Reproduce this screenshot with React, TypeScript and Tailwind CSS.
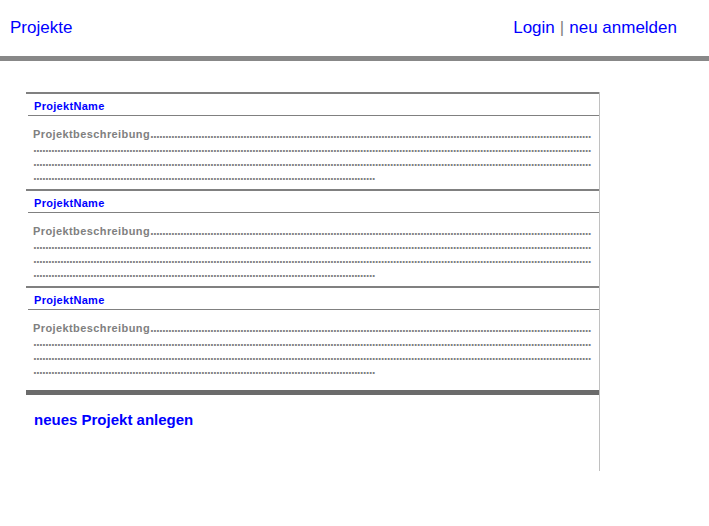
import React from "react"

const projects = ["ProjektName", "ProjektName", "ProjektName"]

// dotted filler rendered as bold periods, like the original page
function Dots({ count }: { count: number }) {
    return (
        <span className="whitespace-nowrap font-['DejaVu_Sans',sans-serif] text-[10px] tracking-[-0.8px]">
            {".".repeat(count)}
        </span>
    )
}

function ProjectRow({ name }: { name: string }) {
    return (
        <div className="border-t-2 border-[#808080]">
            <div className="h-[21px] pl-[8px] pt-[5px] text-[11px] font-bold leading-[14px] tracking-[0.3px] text-[#0000ff]">
                {name}
            </div>
            <div className="ml-[2px] border-t border-[#808080]" />
            <div className="h-[73px] pl-[7px] pt-[11px] text-[11px] font-bold leading-[14px] text-[#808080]">
                <div className="h-[14px] whitespace-nowrap">
                    <span className="tracking-[0.4px]">Projektbeschreibung</span>
                    <Dots count={147} />
                </div>
                <div className="h-[14px]"><Dots count={186} /></div>
                <div className="h-[14px]"><Dots count={186} /></div>
                <div className="h-[14px]"><Dots count={114} /></div>
            </div>
        </div>
    )
}

export default function App() {
    return (
        <div className="min-h-[526px] bg-white font-['Liberation_Sans',Arial,sans-serif]">
            <header className="flex h-[56px] items-start justify-between pl-[10px] pr-[32px] pt-[18px] text-[17px] leading-[20px] text-[#0000ff]">
                <a href="#">Projekte</a>
                <div className="flex gap-[5px]">
                    <a href="#">Login</a>
                    <span className="text-[#808080]">|</span>
                    <a href="#">neu anmelden</a>
                </div>
            </header>
            <div className="h-[5px] bg-[#888888]" />

            <main className="ml-[26px] mt-[31px] h-[379px] w-[574px] border-r border-[#c0c0c0]">
                {projects.map((p, i) => (
                    <ProjectRow key={i} name={p} />
                ))}
                <div className="mt-[7px] h-[5px] bg-[#6b6b6b]" />
                <div className="mt-[15px] pl-[8px] text-[15px] font-bold leading-[20px] text-[#0000ff]">
                    <a href="#">neues Projekt anlegen</a>
                </div>
            </main>
        </div>
    )
}
